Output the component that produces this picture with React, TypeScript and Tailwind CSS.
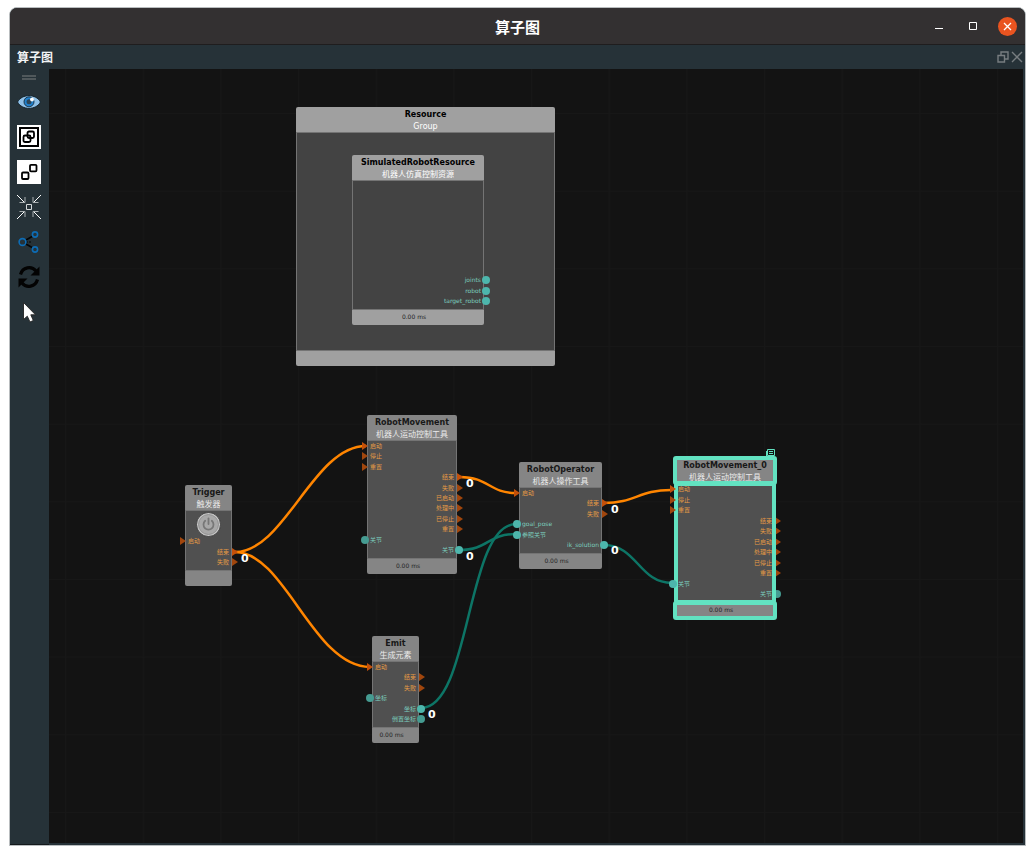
import type { ReactNode } from 'react';
import { clsx } from 'clsx';

type Side = 'in' | 'out';
type Kind = 'flow' | 'data';

interface Port {
  label: string;
  side: Side;
  kind: Kind;
  linked?: boolean;
}

interface GraphNode {
  id: string;
  title: string;
  subtitle: string;
  x: number;
  y: number;
  w: number;
  bodyHeight: number;
  time?: string;
  ports: Port[];
  bright?: boolean;
  selected?: boolean;
  power?: boolean;
  portOffset?: number;
}

const flow = (label: string, side: Side, linked = false): Port => ({ label, side, kind: 'flow', linked });
const data = (label: string, side: Side, linked = false): Port => ({ label, side, kind: 'data', linked });

const movementPorts = (done: boolean): Port[] => [
  flow('启动', 'in', true),
  flow('停止', 'in'),
  flow('重置', 'in'),
  flow('结束', 'out', done),
  flow('失败', 'out'),
  flow('已启动', 'out'),
  flow('处理中', 'out'),
  flow('已停止', 'out'),
  flow('重置', 'out'),
  data('关节', 'in', !done),
  data('关节', 'out', done),
];

// Node coordinates are relative to the canvas
const NODES: GraphNode[] = [
  { id: 'group', title: 'Resource', subtitle: 'Group', x: 247, y: 38, w: 259, bodyHeight: 219, ports: [], bright: true },
  {
    id: 'sim', title: 'SimulatedRobotResource', subtitle: '机器人仿真控制资源',
    x: 303, y: 86, w: 132, bodyHeight: 130, time: '0.00 ms', bright: true, portOffset: 94,
    ports: [data('joints', 'out', true), data('robot', 'out', true), data('target_robot', 'out', true)],
  },
  {
    id: 'trigger', title: 'Trigger', subtitle: '触发器', x: 136, y: 416, w: 47, bodyHeight: 61, power: true,
    ports: [flow('启动', 'in'), flow('结束', 'out', true), flow('失败', 'out')],
  },
  {
    id: 'movement', title: 'RobotMovement', subtitle: '机器人运动控制工具',
    x: 318, y: 346, w: 90, bodyHeight: 119, time: '0.00 ms', ports: movementPorts(true),
  },
  {
    id: 'operator', title: 'RobotOperator', subtitle: '机器人操作工具', x: 470, y: 393, w: 83, bodyHeight: 67, time: '0.00 ms',
    ports: [
      flow('启动', 'in', true), flow('结束', 'out', true), flow('失败', 'out'),
      data('goal_pose', 'in', true), data('参照关节', 'in', true), data('ik_solution', 'out', true),
    ],
  },
  {
    id: 'movement0', title: 'RobotMovement_0', subtitle: '机器人运动控制工具',
    x: 626, y: 389, w: 100, bodyHeight: 120, time: '0.00 ms', ports: movementPorts(false), selected: true,
  },
  {
    id: 'emit', title: 'Emit', subtitle: '生成元素', x: 323, y: 567, w: 47, bodyHeight: 67, time: '0.00 ms',
    ports: [
      flow('启动', 'in', true), flow('结束', 'out'), flow('失败', 'out'),
      data('坐标', 'in'), data('坐标', 'out', true), data('倒置坐标', 'out'),
    ],
  },
];

const WIRES = [
  { d: 'M186 483C236 483 264 377 317 377', color: '#ff8500' },
  { d: 'M186 483C236 483 264 598 321 598', color: '#ff8500' },
  { d: 'M411 408C440 408 440 424 467 424', color: '#ff8500' },
  { d: 'M555 434C586 434 590 421 622 421', color: '#ff8500' },
  { d: 'M410 481C440 481 438 465 467 465', color: '#0d7566' },
  { d: 'M372 639C422 639 417 455 467 455', color: '#0d7566' },
  { d: 'M555 476C588 476 590 514 623 514', color: '#0d7566' },
];

const COUNTS = [
  { x: 192, y: 484 },
  { x: 417, y: 409 },
  { x: 417, y: 482 },
  { x: 562, y: 435 },
  { x: 562, y: 476 },
  { x: 379, y: 640 },
];

const FONT = 'font-["DejaVu_Sans","Noto_Sans_CJK_SC",sans-serif]';

function PortMark({ port }: { port: Port }) {
  const left = port.side === 'in';
  if (port.kind === 'data') {
    return (
      <span
        className={clsx(
          'absolute top-0 size-2 rounded-full',
          port.linked ? 'bg-[#4db6ac]' : 'bg-[#459b91]',
          left ? '-left-[6px]' : '-right-[6px]',
        )}
      />
    );
  }
  return (
    <svg viewBox="0 0 6 8" className={clsx('absolute top-0 h-2 w-[6px]', left ? '-left-[5px]' : '-right-[6px]')}>
      <path d="M0 0L6 4L0 8Z" fill={port.linked ? '#c4500a' : '#a1460d'} />
    </svg>
  );
}

function PortRow({ port }: { port: Port }) {
  return (
    <li
      className={clsx(
        'relative h-2 px-[3px] text-[6px] leading-2 whitespace-nowrap',
        port.side === 'in' ? 'z-20 text-left' : 'text-right',
        port.kind === 'flow' ? 'text-[#e59b45]' : 'text-[#7bcdbd]',
      )}
    >
      <PortMark port={port} />
      {port.label}
    </li>
  );
}

function PowerButton() {
  return (
    <button aria-label="触发" className="mx-auto mt-px block size-[25px] shrink-0">
      <svg viewBox="0 0 25 25" className="size-full">
        <circle cx="12.5" cy="12.5" r="12" fill="#c9c9c9" stroke="#343434" strokeWidth=".8" />
        <circle cx="12.5" cy="12.5" r="10" fill="#a8a8a8" stroke="#888" strokeWidth=".8" />
        <path d="M9.2 8.8a5 5 0 1 0 6.6 0" fill="none" stroke="#777" strokeWidth="1.8" strokeLinecap="round" />
        <path d="M12.5 6.5v5.5" stroke="#777" strokeWidth="1.8" strokeLinecap="round" />
      </svg>
    </button>
  );
}

function NodeCard({ node }: { node: GraphNode }) {
  const bar = node.bright ? 'bg-[#a0a0a0]' : 'bg-[#858585]';
  const outline = node.selected && (
    <span className="pointer-events-none absolute -inset-[2px] z-10 rounded-[3px] border-4 border-[#62e2c1]" />
  );
  return (
    <section className="absolute" style={{ left: node.x, top: node.y, width: node.w }}>
      <header className={clsx('relative h-[25px] rounded-t-[2px] pt-[2px] text-center text-[8px] leading-3 whitespace-nowrap', bar)}>
        {outline}
        <h2 className={clsx('relative z-20 font-bold', node.bright ? 'text-black' : 'text-[#181818]')}>{node.title}</h2>
        <p className={clsx('relative z-20', node.bright ? 'text-white' : 'text-[#ebebeb]')}>{node.subtitle}</p>
      </header>
      <div
        className={clsx(
          'relative flex flex-col border border-[#747474]',
          node.bright ? 'bg-[#434343]' : 'bg-[#505050]',
        )}
        style={{ height: node.bodyHeight }}
      >
        {outline}
        {node.power && <PowerButton />}
        <ul
          className={clsx('-mx-px flex flex-1 flex-col justify-between pb-1', node.power ? 'pt-0' : 'pt-px')}
          style={{ marginTop: node.portOffset }}
        >
          {node.ports.map((port, i) => (
            <PortRow key={i} port={port} />
          ))}
        </ul>
      </div>
      <footer className={clsx('relative h-[15px] rounded-b-[2px] pr-2 text-center text-[6px] leading-[14px] text-[#242424]', bar)}>
        {outline}
        {node.time}
      </footer>
      {node.selected && (
        <svg viewBox="0 0 9 9" className="absolute -top-[9px] right-0 size-[9px]" fill="none" stroke="#62e2c1">
          <path d="M1.500 .5h7v6h-7zM.5 2v6.500H7M3 2.500h4M3 4.500h4" />
        </svg>
      )}
    </section>
  );
}

function ToolButton({ label, children }: { label: string; children: ReactNode }) {
  return (
    <button aria-label={label} className="size-[26px]">
      <svg viewBox="0 0 26 26" className="size-full" fill="none">
        {children}
      </svg>
    </button>
  );
}

function Toolbar() {
  return (
    <nav className="flex w-[39px] shrink-0 flex-col items-center gap-[9px] border-b border-[#14191c] pt-[6px] pr-[2px]">
      <div className="h-[5px] w-[14px] shrink-0 border-y-2 border-[#50585b]" />
      <ToolButton label="显示">
        <path d="M1.500 13C6 4.500 20 4.500 24.500 13C20 21.500 6 21.500 1.500 13Z" fill="#8fc1e8" stroke="#15232c" strokeWidth="1" />
        <circle cx="13" cy="12.800" r="5" fill="#2080cc" stroke="#10202b" strokeWidth=".8" />
        <circle cx="13" cy="12.800" r="2.500" fill="#2c4557" />
        <circle cx="16" cy="10.500" r="1.900" fill="#fff" />
      </ToolButton>
      <ToolButton label="组合">
        <path d="M1 1h24v24H1z" fill="#fff" />
        <path d="M4 4h18v18H4z" stroke="#000" strokeWidth="2" />
        <rect x="7.500" y="11.500" width="7" height="6.500" rx="1.500" stroke="#000" strokeWidth="1.800" />
        <rect x="11.500" y="7.500" width="6.500" height="6.500" rx="1.500" stroke="#000" strokeWidth="1.800" />
      </ToolButton>
      <ToolButton label="拆分">
        <path d="M1 1h24v24H1z" fill="#fff" />
        <rect x="6" y="13.500" width="6.500" height="6.500" rx="1" stroke="#000" strokeWidth="1.800" />
        <rect x="14" y="5.800" width="6.500" height="6.500" rx="1" stroke="#000" strokeWidth="1.800" />
      </ToolButton>
      <ToolButton label="居中">
        <path d="M1 1l8 8M25 1l-8 8M1 25l8-8M25 25l-8-8" stroke="#fff" />
        <path d="M3.500 8.500H9V3M22.500 8.500H17V3M3.500 17.500H9V23M22.500 17.500H17V23" stroke="#aab0b2" />
        <path d="M10.500 10.500h5v5h-5z" stroke="#d5d8da" />
      </ToolButton>
      <ToolButton label="布局">
        <path d="M9 11.500L17 7M9 14.500L17 19" stroke="#050505" strokeWidth="1.600" />
        <path d="M10 13h5" stroke="#050505" strokeWidth="1" strokeDasharray="2 1" />
        <g stroke="#0d6cb5" strokeWidth="1.600">
          <circle cx="6.500" cy="13" r="3.400" />
          <circle cx="19" cy="5.500" r="2.600" />
          <circle cx="19" cy="20.500" r="2.600" />
        </g>
      </ToolButton>
      <ToolButton label="刷新">
        <path d="M4.500 10.500C6.500 3 15.500 1.500 20 7" stroke="#030303" strokeWidth="3.200" />
        <path d="M23.500 2.500V11.500H14.500Z" fill="#030303" />
        <path d="M21.500 15.500C19.500 23 10.500 24.500 6 19" stroke="#030303" strokeWidth="3.200" />
        <path d="M2.500 23.500V14.500H11.500Z" fill="#030303" />
      </ToolButton>
      <ToolButton label="选择">
        <path d="M7.500 3.500V20.500L11.300 17.200L14 23L17.300 21.500L14.800 15.800H19.500Z" fill="#fff" stroke="#222" strokeWidth=".9" />
      </ToolButton>
    </nav>
  );
}

function TitleBar() {
  return (
    <header className="grid h-[37px] shrink-0 grid-cols-[1fr_auto_1fr] items-center border-b border-[#1f1d1e] bg-[#333031] text-white">
      <h1 className="col-start-2 pt-px text-[15px] leading-5 font-bold">算子图</h1>
      <div className="flex items-center justify-end gap-4 pr-2">
        <button aria-label="最小化" className="size-[18px]">
          <svg viewBox="0 0 18 18" stroke="#fff"><path d="M5 11.500h8" /></svg>
        </button>
        <button aria-label="最大化" className="size-[18px]">
          <svg viewBox="0 0 18 18" fill="none" stroke="#fff"><path d="M5.500 5.500h7v7h-7z" /></svg>
        </button>
        <button aria-label="关闭" className="size-[19px] rounded-full bg-[#e95420]">
          <svg viewBox="0 0 19 19" stroke="#fff" strokeWidth="1.300"><path d="M6 6l7 7M13 6l-7 7" /></svg>
        </button>
      </div>
    </header>
  );
}

function DockBar() {
  return (
    <div className="flex h-6 shrink-0 items-center justify-between pr-[2px] pl-[7px] text-[#f2f4f5]">
      <h2 className="text-[12px] leading-4 font-bold">算子图</h2>
      <div className="flex gap-[2px] text-[#777d80]">
        <button aria-label="浮动" className="size-3">
          <svg viewBox="0 0 12 12" fill="none" stroke="currentColor" strokeWidth="1.400">
            <path d="M4 4V1h7v7H8M1 4.500h6.500V11H1z" />
          </svg>
        </button>
        <button aria-label="关闭面板" className="size-3">
          <svg viewBox="0 0 12 12" stroke="currentColor" strokeWidth="1.400"><path d="M1 1l10 10M11 1L1 11" /></svg>
        </button>
      </div>
    </div>
  );
}

function Canvas() {
  return (
    <main className={clsx('relative mr-[2px] mb-[2px] flex-1 overflow-hidden bg-[#131313]', FONT)}>
      <svg className="absolute inset-0 size-full" fill="none">
        <defs>
          <pattern id="grid" x="16" y="44" width="77.66" height="77.66" patternUnits="userSpaceOnUse">
            <path d="M.5 0V78M0 .5H78" stroke="#171717" />
          </pattern>
        </defs>
        <rect width="100%" height="100%" fill="url(#grid)" />
        {WIRES.map((wire) => (
          <path key={wire.d} d={wire.d} stroke={wire.color} strokeWidth="2.5" />
        ))}
      </svg>
      {NODES.map((node) => (
        <NodeCard key={node.id} node={node} />
      ))}
      {COUNTS.map((c) => (
        <span
          key={`${c.x}-${c.y}`}
          className="absolute text-[11px] leading-3 font-bold text-white"
          style={{ left: c.x, top: c.y }}
        >
          0
        </span>
      ))}
    </main>
  );
}

export default function App() {
  return (
    <div className='flex h-screen flex-col bg-white px-[9px] pt-[7px] pb-[9px] font-["Noto_Sans_CJK_SC",sans-serif]'>
      <div className="flex flex-1 flex-col overflow-hidden rounded-t-lg border border-[#b9bdbf] bg-[#263238]">
        <TitleBar />
        <DockBar />
        <div className="flex flex-1">
          <Toolbar />
          <Canvas />
        </div>
      </div>
    </div>
  );
}
